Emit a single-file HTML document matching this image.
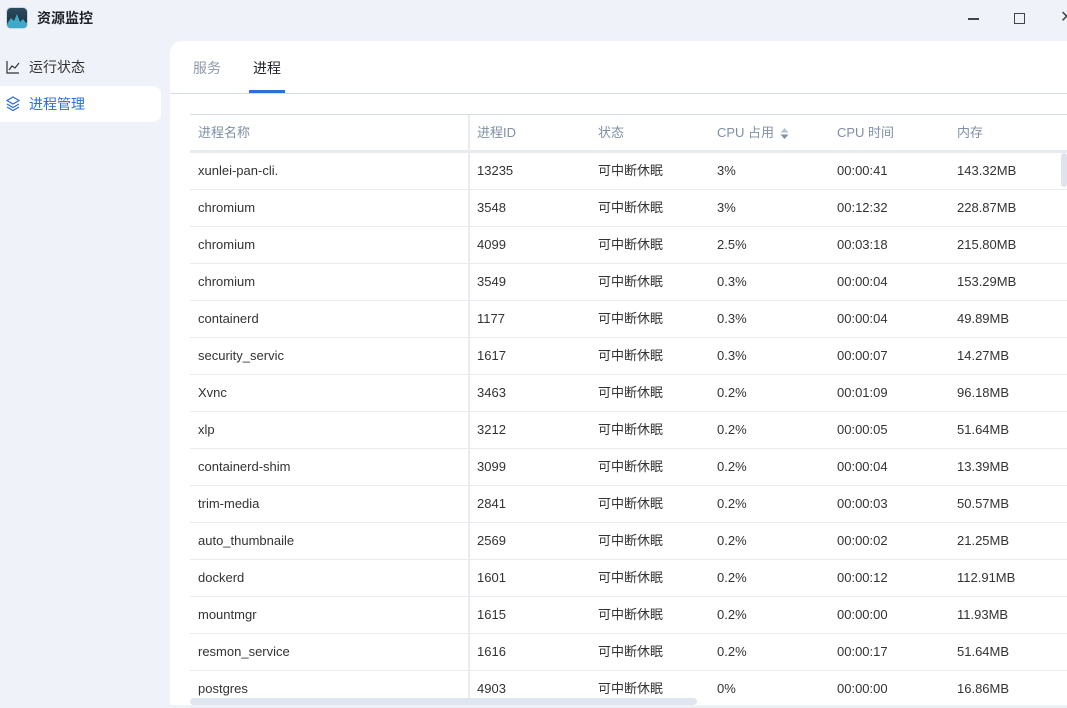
<!DOCTYPE html>
<html><head><meta charset="utf-8"><style>
*{margin:0;padding:0;box-sizing:border-box}
body{width:1067px;height:705px;overflow:hidden;background:#eff2f8;font-family:"Liberation Sans","Noto Sans CJK SC",sans-serif;position:relative;color:#222}
.title{position:absolute;left:37px;top:9px;font-size:14px;font-weight:bold;color:#1f2329;line-height:18px}
.logo{position:absolute;left:6px;top:7px;width:22px;height:22px;border-radius:5px;background:linear-gradient(#2c4a5e,#17323f);border:1px solid #c9d6e8;overflow:hidden}
.nav{position:absolute;left:29px;font-size:14px;line-height:18px}
.act{position:absolute;left:0;top:86px;width:161px;height:36px;background:#fff;border-radius:0 8px 8px 0}
.panel{position:absolute;left:170px;top:41px;width:897px;height:664px;background:#fff;border-radius:12px 0 0 0}
.tab{position:absolute;top:18px;font-size:14px;line-height:18px}
.row{position:absolute;left:20px;width:877px;height:37px;border-bottom:1px solid #e8ebf0;font-size:13px;color:#333}
.row span{position:absolute;top:0;line-height:36px;white-space:nowrap}
.hdr span{line-height:38px}
</style></head><body>
<div class="logo"><svg width="22" height="22"><path d="M0 16 L4 10 L7 13 L10 6 L13 14 L16 11 L19 15 L22 12 L22 22 L0 22Z" fill="#3fa9c9"/></svg></div>
<div class="title">资源监控</div>
<div style="position:absolute;left:968px;top:18px;width:11px;height:1.5px;background:#444"></div>
<div style="position:absolute;left:1014px;top:13px;width:11px;height:11px;border:1.3px solid #444"></div>
<div style="position:absolute;left:1060px;top:9px;font-size:16px;color:#444;line-height:18px">✕</div>
<svg style="position:absolute;left:6px;top:60px" width="14" height="14"><path d="M1 1V13H13M3 10L6 6L9 8L13 3" stroke="#333" fill="none" stroke-width="1.2"/></svg>
<div class="nav" style="top:58px;color:#333">运行状态</div>
<div class="act"></div>
<svg style="position:absolute;left:6px;top:96px" width="14" height="15"><path d="M7 1L13 4.5L7 8L1 4.5Z M1 8L7 11.5L13 8 M1 11L7 14.5L13 11" stroke="#2a6fdb" fill="none" stroke-width="1.3"/></svg>
<div class="nav" style="top:95px;color:#2a6fdb">进程管理</div>
<div class="panel">
<div class="tab" style="left:23px;color:#8e99ab">服务</div>
<div class="tab" style="left:83px;color:#1f2329">进程</div>
<div style="position:absolute;left:79px;top:49px;width:36px;height:3px;background:#2a6fdb"></div>
<div style="position:absolute;left:0;top:52px;width:897px;height:1px;background:#d5dce6"></div>
<div style="position:absolute;left:20px;top:73px;width:877px;height:1px;background:#d5dce6"></div>
<div class="row hdr" style="top:74px;height:38px;border-bottom:3px solid #e8ebf0;color:#7f8fa6"><span style="left:8px;line-height:36px">进程名称</span><span style="left:287px;line-height:36px">进程ID</span><span style="left:408px;line-height:36px">状态</span><span style="left:527px;line-height:36px">CPU 占用</span><svg style="position:absolute;left:590px;top:12px" width="9" height="13"><path d="M0.5 5.5L4.5 1L8.5 5.5Z" fill="#b7c1cf"/><path d="M0.5 7.5L4.5 12L8.5 7.5Z" fill="#7f8fa6"/></svg><span style="left:647px;line-height:36px">CPU 时间</span><span style="left:767px;line-height:36px">内存</span></div>
<div style="position:absolute;left:298px;top:74px;width:2px;height:590px;background:#e8ebf0"></div>
<div id="rows"></div>
<div style="position:absolute;left:891px;top:112px;width:6px;height:34px;background:#dfe4ec;border-radius:3px"></div>
<div style="position:absolute;left:20px;top:657px;width:507px;height:7px;background:#dfe6f0;border-radius:4px"></div>
</div>
<script>
const d=[["xunlei-pan-cli.","13235","3%","00:00:41","143.32MB"],["chromium","3548","3%","00:12:32","228.87MB"],["chromium","4099","2.5%","00:03:18","215.80MB"],["chromium","3549","0.3%","00:00:04","153.29MB"],["containerd","1177","0.3%","00:00:04","49.89MB"],["security_servic","1617","0.3%","00:00:07","14.27MB"],["Xvnc","3463","0.2%","00:01:09","96.18MB"],["xlp","3212","0.2%","00:00:05","51.64MB"],["containerd-shim","3099","0.2%","00:00:04","13.39MB"],["trim-media","2841","0.2%","00:00:03","50.57MB"],["auto_thumbnaile","2569","0.2%","00:00:02","21.25MB"],["dockerd","1601","0.2%","00:00:12","112.91MB"],["mountmgr","1615","0.2%","00:00:00","11.93MB"],["resmon_service","1616","0.2%","00:00:17","51.64MB"],["postgres","4903","0%","00:00:00","16.86MB"]];
let h="";d.forEach((r,i)=>{h+=`<div class="row" style="top:${112+i*37}px"><span style="left:8px">${r[0]}</span><span style="left:287px">${r[1]}</span><span style="left:408px">可中断休眠</span><span style="left:527px">${r[2]}</span><span style="left:647px">${r[3]}</span><span style="left:767px">${r[4]}</span></div>`});
document.getElementById("rows").innerHTML=h;
</script>
</body></html>
